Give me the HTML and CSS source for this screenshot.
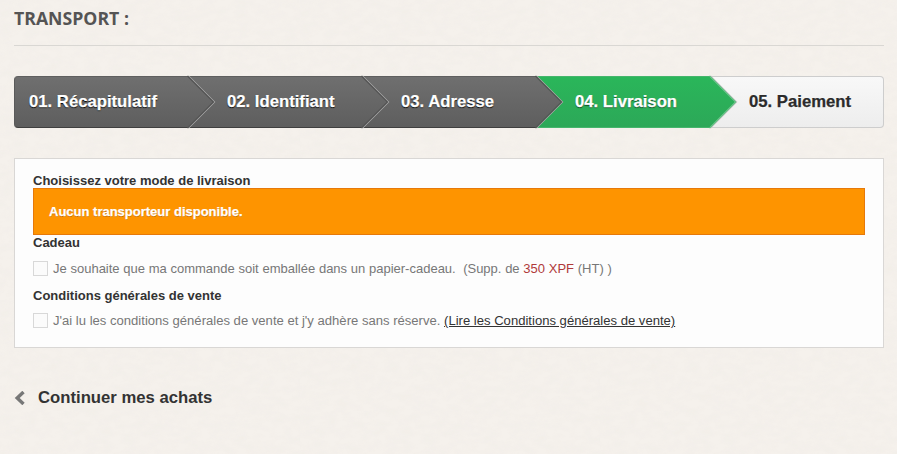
FILE: index.html
```html
<!DOCTYPE html>
<html lang="fr">
<head>
<meta charset="utf-8">
<title>Transport</title>
<link rel="stylesheet" href="styles.css">
</head>
<body>
<main class="page">
  <h1 class="page-title">TRANSPORT :</h1>
  <ol class="steps">
    <li class="step step-done step-first"><span>01. Récapitulatif</span>
      <svg class="arrow" width="28" height="52" viewBox="0 0 28 52"><path class="edge-outer" d="M0.5 0L26.5 26L0.5 52"/><path class="edge-inner" d="M-0.5 0L25.5 26L-0.5 52"/></svg></li>
    <li class="step step-done"><span>02. Identifiant</span>
      <svg class="arrow" width="28" height="52" viewBox="0 0 28 52"><path class="edge-outer" d="M0.5 0L26.5 26L0.5 52"/><path class="edge-inner" d="M-0.5 0L25.5 26L-0.5 52"/></svg></li>
    <li class="step step-done"><span>03. Adresse</span>
      <svg class="arrow" width="28" height="52" viewBox="0 0 28 52"><path class="edge-outer" d="M0.5 0L26.5 26L0.5 52"/><path class="edge-inner" d="M-0.5 0L25.5 26L-0.5 52"/></svg></li>
    <li class="step step-current"><span>04. Livraison</span>
      <svg class="arrow" width="28" height="52" viewBox="0 0 28 52"><path class="edge-outer" d="M0.5 0L26.5 26L0.5 52"/><path class="edge-inner" d="M-0.5 0L25.5 26L-0.5 52"/></svg></li>
    <li class="step step-todo step-last"><span>05. Paiement</span></li>
  </ol>
  <section class="panel">
    <h2 class="panel-title">Choisissez votre mode de livraison</h2>
    <p class="alert">Aucun transporteur disponible.</p>
    <h2 class="panel-title">Cadeau</h2>
    <p class="option option-gift"><span class="checkbox"></span><span>Je souhaite que ma commande soit emballée dans un papier-cadeau.&nbsp; (Supp. de <span class="price">350 XPF</span> (HT) )</span></p>
    <h2 class="panel-title panel-title-spaced">Conditions générales de vente</h2>
    <p class="option option-terms"><span class="checkbox"></span><span>J'ai lu les conditions générales de vente et j'y adhère sans réserve. <a class="terms" href="#">(Lire les Conditions générales de vente)</a></span></p>
  </section>
  <a class="back" href="#">
    <svg class="back-icon" width="11" height="14" viewBox="0 0 11 14"><path d="M9.5 1L3.2 7L9.5 13"/></svg>
    <span>Continuer mes achats</span>
  </a>
</main>
</body>
</html>
```
FILE: styles.css
```css
* { box-sizing: border-box; }
html, body { margin: 0; height: 100%; }
body {
  background-color: #f5f1ec;
  background-image: url("data:image/svg+xml,%3Csvg xmlns='http://www.w3.org/2000/svg' width='300' height='300'%3E%3Cfilter id='n'%3E%3CfeTurbulence type='fractalNoise' baseFrequency='.08 .14' numOctaves='3' stitchTiles='stitch'/%3E%3CfeColorMatrix values='0 0 0 0 .6 0 0 0 0 .55 0 0 0 0 .48 .5 0 0 0 -.16'/%3E%3C/filter%3E%3Crect width='300' height='300' filter='url(%23n)' opacity='.22'/%3E%3C/svg%3E");
  font-family: "Liberation Sans", Arial, sans-serif;
  color: #333;
  overflow: hidden;
}
.page { padding: 0 13px 0 14px; }
.page-title {
  margin: 0;
  height: 46px;
  padding-top: 8px;
  font-family: "Open Sans", sans-serif;
  font-size: 17.7px;
  line-height: 20px;
  font-weight: 700;
  color: #555454;
  border-bottom: 1px solid #d9d7d3;
}
.steps {
  display: flex;
  list-style: none;
  margin: 30px 0 0;
  padding: 0;
  height: 52px;
}
.step {
  position: relative;
  flex: 0 0 174px;
  height: 52px;
  padding-left: 39px;
  font-size: 16.7px;
  font-weight: 700;
  line-height: 50px;
  border-width: 1px 0;
  border-style: solid;
  -webkit-text-stroke: .25px currentColor;
}
.step::after {
  content: "";
  position: absolute;
  z-index: 1;
  top: 0;
  left: 100%;
  width: 25px;
  height: 50px;
  background: inherit;
  clip-path: polygon(0 0, 100% 50%, 0 100%);
}
.step-last::after { display: none; }
.step-done {
  background: linear-gradient(#6f6f6f, #5e5e5e);
  border-color: #5f5f5f #5f5f5f #3f3f3f;
  color: #fff;
  text-shadow: 0 1px 1px #000;
}
.step-current {
  background: linear-gradient(#2ab65a, #2ca858);
  border-color: #45b56c;
  color: #fff;
  text-shadow: 0 1px 1px rgba(0,0,0,.6);
}
.step-todo {
  background: linear-gradient(#f8f8f8, #ededed);
  border: 1px solid #cdcdcd;
  border-left: 0;
  color: #2b2b2b;
  text-shadow: 0 1px 0 #fff;
}
.step-first { padding-left: 14px; border-left: 1px solid #5a5a5a; border-radius: 4px 0 0 4px; }
.step-last { border-radius: 0 4px 4px 0; }
.arrow {
  position: absolute;
  z-index: 2;
  top: -1px;
  left: 100%;
  overflow: visible;
}
.edge-outer, .edge-inner { fill: none; stroke-width: 1.2; }
.step-done .edge-outer { stroke: #ababab; }
.step-done .edge-inner { stroke: #525252; }
.step-current .edge-outer { stroke: #c4c4c4; }
.step-current .edge-inner { stroke: #55bd79; }
.panel {
  margin-top: 30px;
  height: 190px;
  padding: 14px 18px 0;
  background: #fdfdfd;
  border: 1px solid #d9d7d5;
}
.panel-title {
  margin: 0;
  font-size: 13px;
  line-height: 15px;
  font-weight: 700;
  color: #333;
}
.panel-title-spaced { margin-top: 11px; }
.alert {
  margin: 0;
  height: 47px;
  padding: 0 15px;
  background: #fe9400;
  border: 1px solid #e6790a;
  color: #fff;
  font-size: 13px;
  font-weight: 700;
  line-height: 45px;
  text-shadow: 0 1px 0 rgba(160,80,0,.6);
  -webkit-text-stroke: .25px currentColor;
}
.option {
  display: flex;
  align-items: center;
  gap: 5px;
  margin: 10px 0 0;
  height: 17px;
  font-size: 13px;
  line-height: 17px;
  color: #777;
}
.option-gift { word-spacing: .1px; }
.option-terms { margin-top: 9px; font-size: 13.08px; }
.checkbox {
  flex: 0 0 15px;
  height: 15px;
  background: #fbfbfb;
  border: 1px solid #d8d8d8;
}
.price { color: #b03a3a; }
.terms { color: #333; text-decoration: underline; }
.back {
  display: flex;
  align-items: center;
  gap: 13px;
  margin-top: 40px;
  font-size: 16.7px;
  font-weight: 700;
  line-height: 20px;
  color: #333;
  text-decoration: none;
}
.back-icon path { fill: none; stroke: #777; stroke-width: 3.4; }
```
